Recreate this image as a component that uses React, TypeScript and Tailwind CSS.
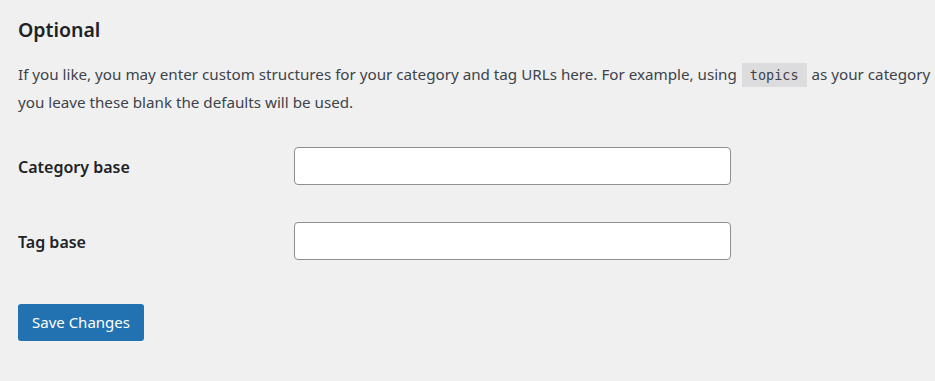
import React from "react";

const Field: React.FC<{ label: string; id: string }> = ({ label, id }) => (
  <div className="flex items-center h-[75px]">
    <label htmlFor={id} className="w-[276px] pt-[3px] text-[16px] font-semibold text-[#1d2327]">
      {label}
    </label>
    <input
      id={id}
      type="text"
      className="w-[437px] h-[38px] bg-white border border-[#8c8f94] rounded-[4px] px-2 text-[15px] outline-none"
    />
  </div>
);

export default function App() {
  return (
    <div
      className="min-h-screen bg-[#f0f0f1] pl-[18px] overflow-hidden text-[#3c434a]"
      style={{ fontFamily: '"Noto Sans", "Open Sans", sans-serif' }}
    >
      <h2 className="pt-[15px] text-[19.5px] leading-[30px] font-semibold text-[#1d2327]">Optional</h2>
      <p className="mt-[16px] text-[15.2px] leading-[27px] whitespace-nowrap">
        If you like, you may enter custom structures for your category and tag URLs here. For example, using{" "}
        <code className="bg-[#dcdcde] px-[8px] py-[4px] mx-[1px] text-[13.5px] text-[#3c434a] font-['DejaVu_Sans_Mono',monospace]">
          topics
        </code>{" "}
        as your category base would make your category links like{" "}
        <code className="bg-[#dcdcde] px-[8px] py-[4px] mx-[1px] text-[13.5px] font-['DejaVu_Sans_Mono',monospace]">
          http://example.org/topics/uncategorized/
        </code>
        . If
        <br />
        you leave these blank the defaults will be used.
      </p>

      <div className="mt-[12px]">
        <Field label="Category base" id="category_base" />
        <Field label="Tag base" id="tag_base" />
      </div>

      <button className="mt-[26px] h-[37px] px-[14px] bg-[#2271b1] text-white text-[15px] rounded-[3px]">
        Save Changes
      </button>
    </div>
  );
}
